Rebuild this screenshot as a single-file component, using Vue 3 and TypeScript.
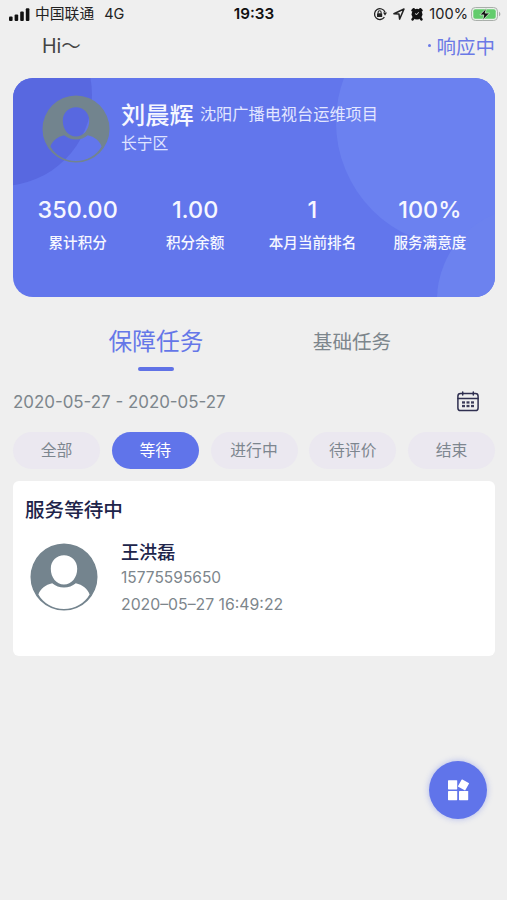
<script setup lang="ts">
import { ref } from 'vue'

interface Stat {
  value: string
  label: string
}

const stats: Stat[] = [
  { value: '350.00', label: '累计积分' },
  { value: '1.00', label: '积分余额' },
  { value: '1', label: '本月当前排名' },
  { value: '100%', label: '服务满意度' },
]

const tabs: string[] = ['保障任务', '基础任务']
const activeTab = ref<number>(0)

const filters: string[] = ['全部', '等待', '进行中', '待评价', '结束']
const activeFilter = ref<number>(1)

// Disc with the head and the shoulders cut out, shared by both avatars
const avatarPath: string =
  'M34 .5a33.5 33.5 0 1 1 0 67a33.5 33.5 0 1 1 0-67z' +
  'M34 12.3c-7.4 0-13.2 5.6-13.2 13.4c0 8.800 5.600 15.700 13.200 15.700s13.200-6.900 13.200-15.700c0-7.800-5.800-13.400-13.200-13.400z' +
  'M22.200 40.300C15.500 41.800 10.500 45.800 8.400 51.400C13.500 60.200 23 66 34 66S54.500 60.200 59.600 51.400C57.500 45.800 52.500 41.800 45.800 40.300C39.500 46 28.500 46 22.200 40.300z'
</script>

<template>
  <div class="screen">
    <header class="status">
      <div class="status-left">
        <svg class="signal" viewBox="0 0 21 13" width="21" height="13">
          <rect x="0" y="8.5" width="3.6" height="4.5" rx="1" />
          <rect x="5.6" y="6.5" width="3.6" height="6.5" rx="1" />
          <rect x="11.2" y="3.6" width="3.6" height="9.4" rx="1" />
          <rect x="16.8" y="0.2" width="3.6" height="12.8" rx="1" />
        </svg>
        <span class="carrier">中国联通</span>
        <span class="network">4G</span>
      </div>
      <span class="clock">19:33</span>
      <div class="status-right">
        <svg class="lock" viewBox="0 0 14 14" width="14" height="14">
          <path d="M12 5.200A5.400 5.400 0 1 0 11.400 10.200" fill="none" stroke="#222" stroke-width="1.3" />
          <path d="M10 5.400h4l-2 3.400z" fill="#222" />
          <rect x="4" y="6.200" width="5.200" height="3.900" rx="0.6" fill="#222" />
          <path d="M5.100 6.400V5.200a1.500 1.500 0 0 1 3 0v1.200" fill="none" stroke="#222" stroke-width="1.1" />
        </svg>
        <svg class="arrow" viewBox="0 0 12 12" width="12" height="12">
          <path d="M0.900 5.700L11 1 6.600 11.100 6 6.100z" fill="none" stroke="#222" stroke-width="1.5" stroke-linejoin="round" />
        </svg>
        <svg class="alarm" viewBox="0 0 14 14" width="14" height="14">
          <circle cx="7" cy="7.200" r="5.400" fill="#111" />
          <path d="M2.600 3.400L3.800 2.300M10.200 2.300l1.200 1.100M3.200 11.300l-.6 1M10.800 11.300l.6 1" stroke="#111" stroke-width="2.600" stroke-linecap="round" />
          <path d="M8.600 5.200L7 7.500 5 6.700" fill="none" stroke="#e8e8e8" stroke-width="0.900" />
        </svg>
        <span class="percent">100%</span>
        <svg class="battery" viewBox="0 0 30 14" width="30" height="14">
          <rect x="0.500" y="0.500" width="26" height="13" rx="3.800" fill="#e9f1e9" stroke="#a9aeaa" />
          <rect x="2.300" y="2.300" width="22.400" height="9.400" rx="2" fill="#62cc6c" />
          <path d="M28 4.700c1.800.6 1.800 4 0 4.600z" fill="#a9aeaa" />
          <path d="M15.400 1.300L8.900 7.900h3.900l-1 5.200 6.700-7h-4.300z" fill="#111" stroke="#e3f5e3" stroke-width="0.700" />
        </svg>
      </div>
    </header>

    <div class="greeting">
      <span class="hi">Hi～</span>
      <span class="state"><i class="dot"></i>响应中</span>
    </div>

    <section class="card">
      <svg class="card-bg" viewBox="0 0 482 220" width="482" height="220">
        <circle cx="-12" cy="17" r="91" fill="#5868e0" />
        <circle cx="448" cy="44" r="125" fill="#6b81f0" />
        <circle cx="517" cy="222" r="93" fill="#6c82ef" />
      </svg>
      <div class="profile">
        <svg class="avatar" viewBox="0 0 68 68" width="68" height="68">
          <path fill="#72848e" fill-rule="evenodd" :d="avatarPath" />
        </svg>
        <div class="who">
          <div class="name-line">
            <span class="name">刘晨辉</span>
            <span class="project">沈阳广播电视台运维项目</span>
          </div>
          <span class="district">长宁区</span>
        </div>
      </div>
      <div class="stats">
        <div v-for="s in stats" :key="s.label" class="stat">
          <span class="value">{{ s.value }}</span>
          <span class="label">{{ s.label }}</span>
        </div>
      </div>
    </section>

    <nav class="tabs">
      <div
        v-for="(t, i) in tabs"
        :key="t"
        class="tab"
        :class="{ active: i === activeTab }"
        @click="activeTab = i"
      >
        {{ t }}
      </div>
    </nav>

    <div class="range">
      <span class="dates">2020-05-27 - 2020-05-27</span>
      <svg class="calendar" viewBox="0 0 22 21" width="22" height="21">
        <rect x="0.900" y="2.600" width="20.200" height="17" rx="2.600" fill="none" stroke="#2f2f50" stroke-width="1.500" />
        <path d="M1 7.400h20M5.700 1v3M16.300 1v3" stroke="#2f2f50" stroke-width="1.500" stroke-linecap="round" />
        <g fill="#3c3c5a">
          <rect x="5" y="10.300" width="3" height="2.300" />
          <rect x="9.500" y="10.300" width="3" height="2.300" />
          <rect x="14" y="10.300" width="3" height="2.300" />
          <rect x="5" y="13.900" width="3" height="2.300" />
          <rect x="9.500" y="13.900" width="3" height="2.300" />
          <rect x="14" y="13.900" width="3" height="2.300" />
        </g>
      </svg>
    </div>

    <div class="filters">
      <button
        v-for="(f, i) in filters"
        :key="f"
        class="pill"
        :class="{ on: i === activeFilter }"
        @click="activeFilter = i"
      >
        {{ f }}
      </button>
    </div>

    <article class="task">
      <h2 class="task-title">服务等待中</h2>
      <div class="task-body">
        <svg class="avatar" viewBox="0 0 68 68" width="68" height="68">
          <path fill="#74848e" fill-rule="evenodd" :d="avatarPath" />
        </svg>
        <div class="contact">
          <span class="contact-name">王洪磊</span>
          <span class="phone">15775595650</span>
          <span class="time">2020–05–27 16:49:22</span>
        </div>
      </div>
    </article>

    <button class="fab" aria-label="menu">
      <svg viewBox="0 0 22 22" width="22" height="22" fill="#fff">
        <rect x="1" y="1.200" width="9.200" height="9.200" rx="0.600" />
        <rect x="1" y="12" width="9.200" height="9.200" rx="0.600" />
        <rect x="12" y="12" width="9.200" height="9.200" rx="0.600" />
        <rect x="12.300" y="1.700" width="8.400" height="8.400" rx="0.600" transform="rotate(29 16.500 5.900)" />
      </svg>
    </button>
  </div>
</template>

<style>
body {
  background: #efefef;
}
</style>

<style scoped>
.screen {
  position: relative;
  box-sizing: border-box;
  width: 507px;
  height: 900px;
  padding: 0 12px 0 13px;
  overflow: hidden;
  background: #efefef;
  font-family: Inter, 'Noto Sans CJK SC', sans-serif;
  color: #7d868c;
}

.status {
  display: grid;
  grid-template-columns: 1fr auto 1fr;
  align-items: center;
  height: 28px;
  margin: 0 -6px 0 -4px;
  color: #222;
  line-height: 28px;
}
.status-left,
.status-right {
  display: flex;
  align-items: center;
}
.signal {
  fill: #111;
}
.carrier {
  margin-left: 5px;
  font-size: 14.8px;
}
.network {
  margin-left: 10px;
  font-size: 14.5px;
}
.clock {
  margin-right: 2px;
  font-size: 15.2px;
  font-weight: 600;
  color: #111;
}
.status-right {
  justify-content: flex-end;
}
.arrow {
  margin-left: 6px;
}
.alarm {
  margin-left: 5px;
}
.percent {
  margin: 0 3px 0 5px;
  font-size: 14.6px;
}

.greeting {
  display: flex;
  justify-content: space-between;
  align-items: center;
  height: 36px;
  padding-left: 29px;
}
.hi {
  margin-top: -3px;
  font-size: 19.6px;
  color: #444;
}
.state {
  display: flex;
  align-items: center;
  margin-top: -2px;
  font-size: 19.5px;
  color: #6a79e6;
}
.dot {
  width: 3px;
  height: 3px;
  margin-right: 5px;
  border-radius: 50%;
  background: #6a79e6;
}

.card {
  position: relative;
  height: 219px;
  margin-top: 14px;
  border-radius: 20px;
  overflow: hidden;
  background: #6276ec;
  color: #f6f7ff;
}
.card-bg {
  position: absolute;
  top: 0;
  left: 0;
}
.profile {
  position: relative;
  display: flex;
  padding: 17px 0 0 29px;
}
.avatar {
  flex: none;
}
.who {
  display: flex;
  flex-direction: column;
  margin-left: 11px;
}
.name-line {
  display: flex;
  align-items: center;
  height: 36px;
}
.name {
  font-size: 24.3px;
  font-weight: 500;
}
.project {
  margin-left: 6px;
  font-size: 16.2px;
  color: #e3e7ff;
}
.district {
  line-height: 26px;
  font-size: 15.8px;
  color: #dfe3ff;
}
.stats {
  position: relative;
  display: grid;
  grid-template-columns: repeat(4, 117.4px);
  margin: 30px 0 0 6px;
}
.stat {
  display: flex;
  flex-direction: column;
  align-items: center;
}
.value {
  line-height: 34px;
  font-size: 23.4px;
  font-weight: 500;
}
.label {
  line-height: 32px;
  font-size: 14.6px;
  font-weight: 500;
}

.tabs {
  display: grid;
  grid-template-columns: repeat(2, 196px);
  height: 74px;
  padding-left: 45px;
}
.tab {
  display: flex;
  flex-direction: column;
  align-items: center;
  padding-top: 25px;
  line-height: 40px;
  font-size: 19.6px;
}
.tab.active {
  font-size: 23.7px;
  color: #6577e8;
}
.tab.active::after {
  content: '';
  width: 36px;
  height: 4px;
  margin-top: 5px;
  border-radius: 2px;
  background: #6072e6;
}

.range {
  display: flex;
  align-items: center;
  justify-content: space-between;
  height: 61px;
  padding-right: 16px;
}
.dates {
  font-size: 16.9px;
}

.filters {
  display: flex;
  justify-content: space-between;
}
.pill {
  width: 87px;
  height: 37px;
  padding: 1px 0 0;
  border: 0;
  border-radius: 19px;
  background: #ebe8f0;
  font: inherit;
  font-size: 15.8px;
  line-height: 36px;
  color: #7d868f;
}
.pill.on {
  background: #6074ea;
  color: #fff;
}

.task {
  box-sizing: border-box;
  height: 175px;
  margin-top: 12px;
  padding: 12px;
  border-radius: 6px;
  background: #fff;
}
.task-title {
  margin: 0;
  font-size: 19.6px;
  font-weight: 500;
  line-height: 35px;
  color: #20244a;
}
.task-body {
  display: flex;
  padding: 15px 0 0 5px;
}
.contact {
  display: flex;
  flex-direction: column;
  margin: -5px 0 0 23px;
}
.contact-name {
  font-size: 18.1px;
  font-weight: 500;
  line-height: 28px;
  color: #20244a;
}
.phone {
  font-size: 15.5px;
  line-height: 24px;
}
.time {
  font-size: 15.8px;
  line-height: 30px;
}

.fab {
  position: absolute;
  left: 429px;
  top: 761px;
  display: flex;
  align-items: center;
  justify-content: center;
  width: 58px;
  height: 58px;
  padding: 0;
  border: 0;
  border-radius: 50%;
  background: #6074ea;
  box-shadow: 0 0 6px rgba(96, 116, 234, 0.45);
}
</style>
